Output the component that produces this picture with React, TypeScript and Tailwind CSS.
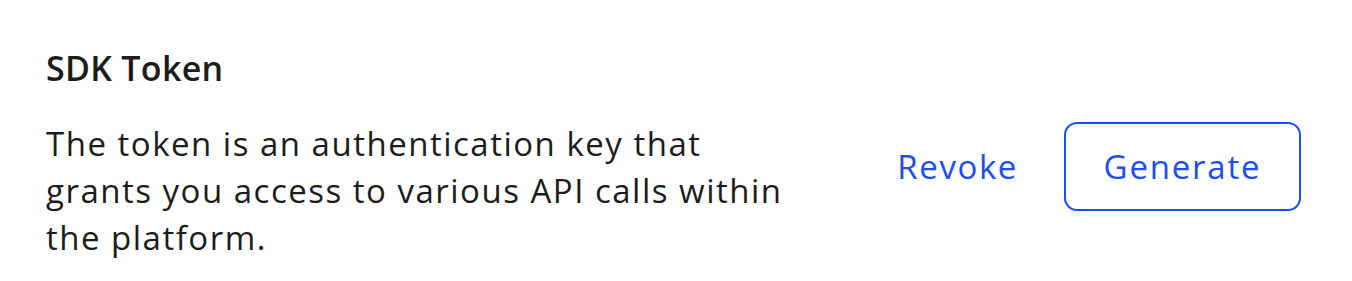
import React from "react";

export default function App() {
  return (
    <div className="w-[1352px] h-[281px] bg-white font-['Open_Sans',sans-serif] text-[#1c1c1c] pl-[46px] pr-[51px] pt-[41px]">
      <h2 className="text-[34px] leading-[54px] font-semibold tracking-[0.3px]">SDK Token</h2>
      <div className="flex items-start justify-between mt-[25px]">
        <p className="w-[760px] text-[33px] leading-[47px] tracking-[1.5px]">
          The token is an authentication key that grants you access to various API calls within the platform.
        </p>
        <div className="flex items-center gap-[46px] mt-[2px]">
          <button className="text-[33px] tracking-[1.6px] text-[#1b4df6] px-0">Revoke</button>
          <button className="w-[237px] h-[89px] rounded-[13px] border-2 border-[#1b4df6] text-[33px] tracking-[1.8px] text-[#1b4df6]">
            Generate
          </button>
        </div>
      </div>
    </div>
  );
}
